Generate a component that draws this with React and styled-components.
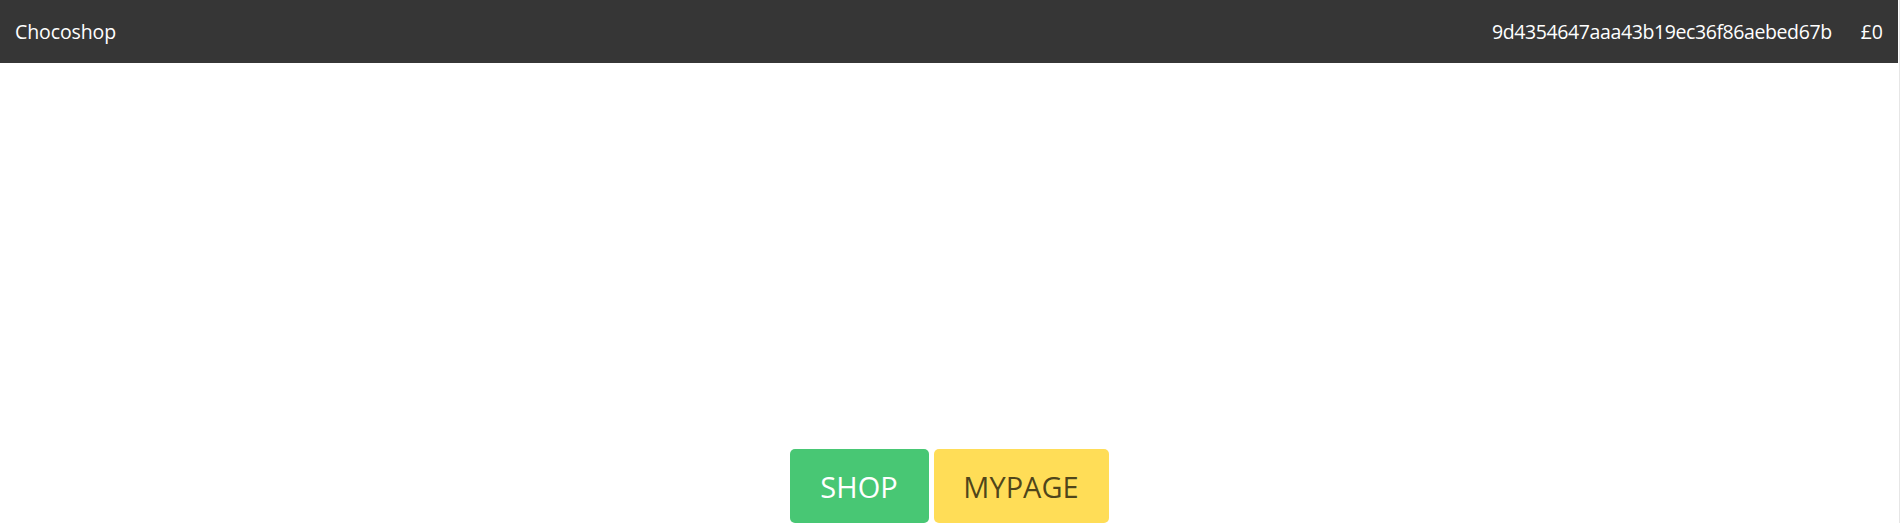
import React from 'react'
import styled, { createGlobalStyle } from 'styled-components'

const GlobalStyle = createGlobalStyle`
  html {
    border-right: 1px solid #e6e6e6;
    background: #fff;
  }
  body {
    margin: 0 1px 0 0;
    font-family: 'Open Sans', 'Noto Sans', sans-serif;
    color: #4a4a4a;
  }
`

const Navbar = styled.nav`
  height: 63px;
  background-color: #363636;
  color: #fff;
  display: flex;
  align-items: center;
  justify-content: space-between;
  padding: 0 15px 0 15px;
  font-size: 19.5px;
`

const Brand = styled.div`
  letter-spacing: -0.1px;
`

const NavEnd = styled.div`
  display: flex;
  align-items: center;
  gap: 29px;
`

const Account = styled.span`
  letter-spacing: -0.4px;
`

const Hero = styled.main`
  display: flex;
  justify-content: center;
  gap: 5px;
  padding-top: 386px;
`

const Button = styled.a`
  display: inline-flex;
  align-items: center;
  justify-content: center;
  height: 74px;
  width: ${({ $width }) => $width}px;
  border-radius: 5px;
  font-size: 29px;
  text-decoration: none;
  cursor: pointer;
  background-color: ${({ $bg }) => $bg};
  color: ${({ $fg }) => $fg};
`

const LINKS = [
  { name: 'SHOP', width: 139, bg: '#48c774', fg: '#fff' },
  { name: 'MYPAGE', width: 175, bg: '#ffdd57', fg: 'rgba(0, 0, 0, 0.7)' },
]

export default function App() {
  return (
    <>
      <GlobalStyle />
      <Navbar>
        <Brand>Chocoshop</Brand>
        <NavEnd>
          <Account>9d4354647aaa43b19ec36f86aebed67b</Account>
          <span>£0</span>
        </NavEnd>
      </Navbar>
      <Hero>
        {LINKS.map(({ name, width, bg, fg }) => (
          <Button key={name} $width={width} $bg={bg} $fg={fg}>
            {name}
          </Button>
        ))}
      </Hero>
    </>
  )
}
